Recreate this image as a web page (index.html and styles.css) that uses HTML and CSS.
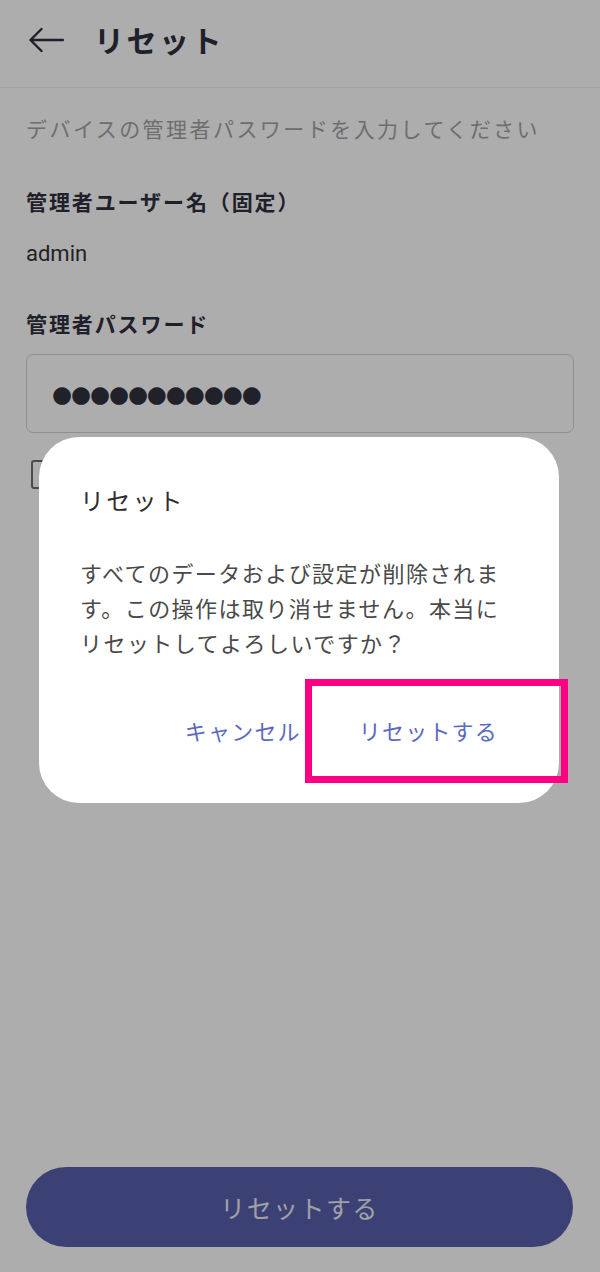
FILE: index.html
```html
<!DOCTYPE html>
<html lang="ja">
<head>
    <meta charset="UTF-8">
    <meta name="viewport" content="width=device-width, initial-scale=1.0">
    <title>リセット</title>
    <link rel="stylesheet" href="styles.css">
</head>
<body>

    <div class="page">
        <!-- App bar -->
        <header class="app-bar">
            <button class="back" aria-label="戻る">
                <svg width="36" height="26" viewBox="0 0 36 26">
                    <path d="M35 13 H2.5 M13.5 2 L2.5 13 L13.5 24" fill="none" stroke="currentColor" stroke-width="2.4" stroke-linecap="round" stroke-linejoin="round"/>
                </svg>
            </button>
            <h1>リセット</h1>
        </header>

        <main class="content">
            <p class="lead">デバイスの管理者パスワードを入力してください</p>

            <div class="field">
                <h2 class="label">管理者ユーザー名（固定）</h2>
                <p class="value">admin</p>
            </div>

            <div class="field">
                <h2 class="label">管理者パスワード</h2>
                <div class="input">●●●●●●●●●●●</div>
                <label class="check"><span class="box"></span>パスワードを表示</label>
            </div>
        </main>

        <footer class="bottom">
            <button class="primary">リセットする</button>
        </footer>
    </div>

    <!-- Dialog -->
    <div class="scrim">
        <div class="dialog">
            <h3 class="dialog-title">リセット</h3>
            <p class="dialog-text">すべてのデータおよび設定が削除されます。この操作は取り消せません。本当にリセットしてよろしいですか？</p>
            <div class="dialog-actions">
                <button class="text-btn">キャンセル</button>
                <button class="text-btn">リセットする</button>
            </div>
            <div class="highlight"></div>
        </div>
    </div>

</body>
</html>
```

FILE: styles.css
```css
body {
    margin: 0;
    font-family: Roboto, "Noto Sans CJK JP", sans-serif;
    background-color: #fff;
    color: #30303e;
}

.page {
    display: flex;
    flex-direction: column;
    min-height: 100vh;
}

/* App bar */
.app-bar {
    display: flex;
    align-items: center;
    gap: 30px;
    height: 87px;
    padding-left: 28px;
    border-bottom: 1px solid #f2f2f2;
}

.back {
    display: flex;
    padding: 0;
    border: none;
    background: none;
    color: #30303e;
    margin-top: -7px;
}

.app-bar h1 {
    margin: 0 0 10px;
    font-size: 30px;
    font-weight: 700;
    letter-spacing: 2.5px;
}

/* Content */
.content {
    flex: 1;
    padding: 0 26px;
}

.lead {
    margin: 27px 0 0;
    font-size: 21px;
    line-height: 30px;
    letter-spacing: 2.45px;
    color: #a2a2a6;
}

.field {
    margin-top: 43px;
}

.field + .field {
    margin-top: 42px;
}

.label {
    margin: 0;
    font-size: 21px;
    line-height: 30px;
    font-weight: 700;
    letter-spacing: 1.9px;
}

.value {
    margin: 22px 0 0;
    font-size: 22px;
    line-height: 28px;
    color: #333;
}

.input {
    margin-top: 14px;
    height: 77px;
    display: flex;
    align-items: center;
    padding-left: 25px;
    border: 1px solid #d4d4d4;
    border-radius: 7px;
    font-family: "DejaVu Sans", sans-serif;
    font-size: 23px;
    letter-spacing: -1.1px;
    color: #32323f;
}

.check {
    display: flex;
    align-items: center;
    gap: 20px;
    margin: 26px 0 0 5px;
    font-size: 21px;
}

.box {
    width: 23px;
    height: 25px;
    border: 2px solid #6e6e78;
    border-radius: 3px;
}

/* Bottom button */
.bottom {
    padding: 0 27px 25px 26px;
}

.primary {
    width: 100%;
    height: 80px;
    border: none;
    border-radius: 40px;
    background-color: #5860ab;
    color: #ececf4;
    font-family: "Noto Sans CJK JP", sans-serif;
    font-size: 25px;
    letter-spacing: 1.4px;
}

/* Dialog */
.scrim {
    position: fixed;
    inset: 0;
    background-color: rgba(0, 0, 0, 0.32);
    display: flex;
    justify-content: center;
    align-items: flex-start;
    padding-top: 437px;
}

.dialog {
    position: relative;
    width: 520px;
    margin-left: -2px;
    box-sizing: border-box;
    padding: 49px 44px 49px 41px;
    background-color: #fff;
    border-radius: 40px;
}

.dialog-title {
    margin: 0;
    font-size: 24px;
    line-height: 32px;
    font-weight: 400;
    letter-spacing: 2.2px;
    color: #2e2e2e;
}

.dialog-text {
    margin: 39px 0 0;
    font-size: 22px;
    line-height: 35px;
    letter-spacing: 1.45px;
    color: #4a4a4a;
}

.dialog-actions {
    display: flex;
    justify-content: flex-end;
    gap: 30px;
    margin-top: 44px;
    margin-right: 3px;
}

.text-btn {
    height: 48px;
    padding: 0 14px;
    border: none;
    background: none;
    color: #5c6bc0;
    font-family: "Noto Sans CJK JP", sans-serif;
    font-size: 22px;
    letter-spacing: 1.2px;
}

.highlight {
    position: absolute;
    left: 266px;
    top: 242px;
    width: 263px;
    height: 104px;
    box-sizing: border-box;
    border: 7px solid #ff0084;
}
```
